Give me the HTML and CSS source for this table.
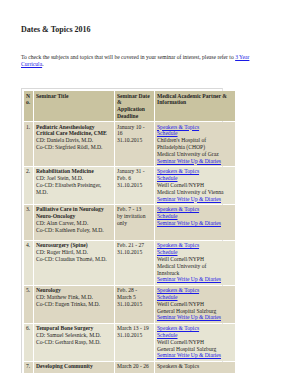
FILE: index.html
```html
<!DOCTYPE html>
<html>
<head>
<meta charset="utf-8">
<link rel="stylesheet" href="styles.css">
</head>
<body>
<div class="page">
  <h1 class="title">Dates &amp; Topics 2016</h1>
  <p class="intro">To check the subjects and topics that will be covered in your seminar of interest, please refer to <a href="#">3 Year<br>Curricula</a>.</p>
  <div class="frame">
    <table class="dates">
      <colgroup>
        <col class="c-no"><col class="c-title"><col class="c-date"><col class="c-info">
      </colgroup>
      <tr class="head">
        <th>N<br>o.</th>
        <th>Seminar Title</th>
        <th>Seminar Date<br>&amp;<br>Application<br>Deadline</th>
        <th>Medical Academic Partner &amp;<br>Information</th>
      </tr>
      <tr class="odd">
        <td>1.</td>
        <td><b>Pediatric Anesthesiology<br>Critical Care Medicine, CME</b><br>CD: Daniela Davis, M.D.<br>Co-CD: Siegfried Rödl, M.D.</td>
        <td>January 10 -<br>16<br>31.10.2015</td>
        <td><a href="#">Speakers &amp; Topics</a><br><a href="#">Schedule</a><br>Children's Hospital of<br>Philadelphia (CHOP)<br>Medical University of Graz<br><a href="#">Seminar Write Up &amp; Diaries</a></td>
      </tr>
      <tr class="even">
        <td>2.</td>
        <td><b>Rehabilitation Medicine</b><br>CD: Joel Stein, M.D.<br>Co-CD: Elisabeth Preisinger,<br>M.D.</td>
        <td>January 31 -<br>Feb. 6<br>31.10.2015</td>
        <td><a href="#">Speakers &amp; Topics</a><br><a href="#">Schedule</a><br>Weill Cornell/NYPH<br>Medical University of Vienna<br><a href="#">Seminar Write Up &amp; Diaries</a></td>
      </tr>
      <tr class="odd tall">
        <td>3.</td>
        <td><b>Palliative Care in Neurology<br>Neuro-Oncology</b><br>CD: Alan Carver, M.D.<br>Co-CD: Kathleen Foley, M.D.</td>
        <td>Feb. 7 - 13<br>by invitation<br>only</td>
        <td><a href="#">Speakers &amp; Topics</a><br><a href="#">Schedule</a><br><a href="#">Seminar Write Up &amp; Diaries</a></td>
      </tr>
      <tr class="even">
        <td>4.</td>
        <td><b>Neurosurgery (Spine)</b><br>CD: Roger Härtl, M.D.<br>Co-CD: Claudius Thomé, M.D.</td>
        <td>Feb. 21 - 27<br>31.10.2015</td>
        <td><a href="#">Speakers &amp; Topics</a><br><a href="#">Schedule</a><br>Weill Cornell/NYPH<br>Medical University of<br>Innsbruck<br><a href="#">Seminar Write Up &amp; Diaries</a></td>
      </tr>
      <tr class="odd">
        <td>5.</td>
        <td><b>Neurology</b><br>CD: Matthew Fink, M.D.<br>Co-CD: Eugen Trinka, M.D.</td>
        <td>Feb. 28 -<br>March 5<br>31.10.2015</td>
        <td><a href="#">Speakers &amp; Topics</a><br><a href="#">Schedule</a><br>Weill Cornell/NYPH<br>General Hospital Salzburg<br><a href="#">Seminar Write Up &amp; Diaries</a></td>
      </tr>
      <tr class="even">
        <td>6.</td>
        <td><b>Temporal Bone Surgery</b><br>CD: Samuel Selesnick, M.D.<br>Co-CD: Gerhard Rasp, M.D.</td>
        <td>March 13 - 19<br>31.10.2015</td>
        <td><a href="#">Speakers &amp; Topics</a><br><a href="#">Schedule</a><br>Weill Cornell/NYPH<br>General Hospital Salzburg<br><a href="#">Seminar Write Up &amp; Diaries</a></td>
      </tr>
      <tr class="odd">
        <td>7.</td>
        <td><b>Developing Community</b><br>&nbsp;</td>
        <td>March 20 - 26</td>
        <td>Speakers &amp; Topics</td>
      </tr>
    </table>
  </div>
</div>
</body>
</html>
```

FILE: styles.css
```css
html, body {
  margin: 0;
  padding: 0;
  background: #fff;
}
.page {
  height: 373px;
  overflow: hidden;
  padding-left: 21px;
  font-family: "Liberation Serif", "Times New Roman", serif;
  color: #1e1e1e;
}
.title {
  margin: 0;
  padding-top: 25px;
  font-size: 8px;
  line-height: 9px;
  font-weight: bold;
}
.intro {
  margin: 19.5px 0 0;
  font-size: 5.6px;
  line-height: 7px;
}
a {
  color: #1a1ae6;
  text-decoration: underline;
}
.frame {
  margin-top: 20.5px;
  width: 198px;
  padding: 1px;
  border-left: 1px solid #d9d9d9;
  border-top: 1px solid #d9d9d9;
  border-right: 1px solid #e4e4e4;
  height: 400px;
}
.dates {
  table-layout: fixed;
  width: 213px;
  border-collapse: separate;
  border-spacing: 1px;
  font-size: 5.6px;
  line-height: 6.8px;
}
.c-no { width: 9px; }
.c-title { width: 80px; }
.c-date { width: 39px; }
.c-info { width: 80px; }
.dates th,
.dates td {
  padding: 1.5px 1px 1.5px 2px;
  text-align: left;
  vertical-align: top;
  white-space: nowrap;
  overflow: visible;
}
.dates th {
  font-weight: bold;
}
.head th { background: #c9c3a0; }
.odd td { background: #ddd7c2; }
.even td { background: #e6e4d3; }
.tall { height: 35px; }
```
